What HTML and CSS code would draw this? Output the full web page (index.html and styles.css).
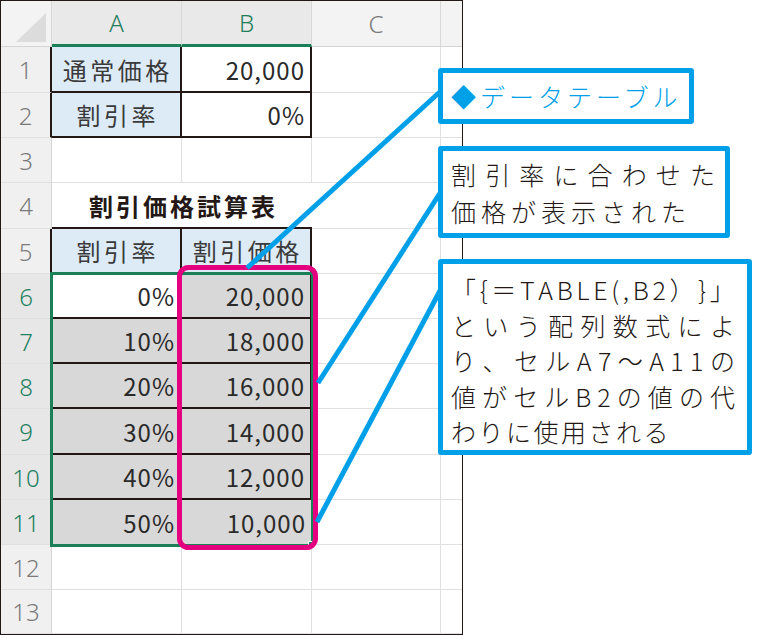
FILE: index.html
```html
<!DOCTYPE html>
<html lang="ja">
<head>
<meta charset="utf-8">
<title>データテーブル</title>
<link rel="stylesheet" href="styles.css">
</head>
<body>
<div class="page">
  <div class="sheet">
    <div class="c h corner"><svg width="50" height="45" viewBox="0 0 50 45"><polygon points="15,41 45,41 45,12" fill="#dcdcdc"/></svg></div>
    <div class="c h sel">A</div>
    <div class="c h sel">B</div>
    <div class="c h">C</div>
    <div class="c h last"></div>

    <div class="c r dk">1</div>
    <div class="c jp fb bx">通常価格</div>
    <div class="c num bx">20,000</div>
    <div class="c"></div>
    <div class="c last"></div>

    <div class="c r dk">2</div>
    <div class="c jp fb bx">割引率</div>
    <div class="c num bx">0%</div>
    <div class="c"></div>
    <div class="c last"></div>

    <div class="c r">3</div>
    <div class="c"></div>
    <div class="c"></div>
    <div class="c"></div>
    <div class="c last"></div>

    <div class="c r">4</div>
    <div class="c title bb">割引価格試算表</div>
    <div class="c"></div>
    <div class="c last"></div>

    <div class="c r dk">5</div>
    <div class="c jp fb bx">割引率</div>
    <div class="c jp fb bx">割引価格</div>
    <div class="c"></div>
    <div class="c last"></div>

    <div class="c r sel">6</div>
    <div class="c num bx">0%</div>
    <div class="c num fg bx">20,000</div>
    <div class="c"></div>
    <div class="c last"></div>

    <div class="c r sel">7</div>
    <div class="c num fg bx">10%</div>
    <div class="c num fg bx">18,000</div>
    <div class="c"></div>
    <div class="c last"></div>

    <div class="c r sel">8</div>
    <div class="c num fg bx">20%</div>
    <div class="c num fg bx">16,000</div>
    <div class="c"></div>
    <div class="c last"></div>

    <div class="c r sel">9</div>
    <div class="c num fg bx">30%</div>
    <div class="c num fg bx">14,000</div>
    <div class="c"></div>
    <div class="c last"></div>

    <div class="c r sel">10</div>
    <div class="c num fg bx">40%</div>
    <div class="c num fg bx">12,000</div>
    <div class="c"></div>
    <div class="c last"></div>

    <div class="c r sel">11</div>
    <div class="c num fg br">50%</div>
    <div class="c num fg">10,000</div>
    <div class="c"></div>
    <div class="c last"></div>

    <div class="c r">12</div>
    <div class="c"></div>
    <div class="c"></div>
    <div class="c"></div>
    <div class="c last"></div>

    <div class="c r">13</div>
    <div class="c"></div>
    <div class="c"></div>
    <div class="c"></div>
    <div class="c last"></div>

    <div class="selbox"></div>
    <div class="handle"></div>
  </div>

  <svg class="ov" width="783" height="635" viewBox="0 0 783 635">
    <rect x="179.5" y="267.5" width="136" height="280" rx="9" ry="9" fill="none" stroke="#e4007f" stroke-width="5"/>
    <g stroke="#00a0e9" stroke-width="5" stroke-linecap="butt">
      <line x1="247" y1="268" x2="442" y2="90"/>
      <line x1="318" y1="383" x2="442" y2="190"/>
      <line x1="317" y1="522" x2="442" y2="287"/>
    </g>
  </svg>

  <div class="co co1">◆データテーブル</div>
  <div class="co co2">
    <div class="jl"><span>割</span><span>引</span><span>率</span><span>に</span><span>合</span><span>わ</span><span>せ</span><span>た</span></div>
    <div class="l2">価格が表示された</div>
  </div>
  <div class="co co3">
    <div class="jl"><span>「</span><span>{</span><span>＝</span><span>T</span><span>A</span><span>B</span><span>L</span><span>E</span><span>(</span><span>,</span><span>B</span><span>2</span><span>）</span><span>}</span><span>」</span></div>
    <div class="jl"><span>と</span><span>い</span><span>う</span><span>配</span><span>列</span><span>数</span><span>式</span><span>に</span><span>よ</span></div>
    <div class="jl"><span>り</span><span>、</span><span>セ</span><span>ル</span><span>A</span><span>7</span><span>〜</span><span>A</span><span>1</span><span>1</span><span>の</span></div>
    <div class="jl"><span>値</span><span>が</span><span>セ</span><span>ル</span><span>B</span><span>2</span><span>の</span><span>値</span><span>の</span><span>代</span></div>
    <div class="l5">わりに使用される</div>
  </div>
</div>
</body>
</html>
```

FILE: styles.css
```css
* {
  box-sizing: border-box;
  margin: 0;
  padding: 0;
}

html, body {
  background: #fff;
}

body {
  margin: 0;
  font-family: "Noto Sans CJK JP", sans-serif;
}

.page {
  position: relative;
  width: 783px;
  height: 635px;
  overflow: hidden;
  background: #fff;
}

.sheet {
  position: relative;
  width: 463px;
  height: 635px;
  border: 1px solid #231815;
  display: grid;
  grid-template-columns: 51px 130px 130px 129px 1fr;
  grid-template-rows: 46px 46px 45px 45px 46px 45px 45px 45px 45px 46px 45px 45px 45px 44px;
  background: #fff;
}

.c {
  display: flex;
  align-items: center;
  border-right: 1px solid #e0e0e0;
  border-bottom: 1px solid #e0e0e0;
  font-size: 24px;
  color: #333;
  white-space: nowrap;
  overflow: hidden;
}

.c.last {
  border-right: none;
}

.h {
  background: #f3f3f3;
  justify-content: center;
  font-family: "Noto Sans", sans-serif;
  font-size: 24px;
  font-weight: 300;
  color: #7a7a7a;
  border-right-color: #d8d8d8;
  border-bottom-color: #d4d4d4;
}

.h.sel {
  background: #e8e9e8;
  color: #1f7d5b;
  border-bottom: 3px solid #1b7f57;
}

.corner {
  align-items: flex-end;
  justify-content: flex-start;
}

.corner svg {
  display: block;
}

.r {
  background: #f0f0f0;
  justify-content: center;
  font-family: "Noto Sans", sans-serif;
  font-weight: 300;
  color: #7a7a7a;
  border-right-color: #d4d4d4;
}

.r.sel {
  background: #e7e7e7;
  color: #21805e;
}

.r.dk {
  border-right: 2px solid #231815;
}

.jp {
  justify-content: center;
  letter-spacing: 3.5px;
  padding-left: 3.5px;
  color: #3a3a3a;
}

.num {
  justify-content: flex-end;
  padding-right: 5px;
  letter-spacing: 1px;
  color: #2a2a2a;
}

.fb {
  background: #ddebf7;
}

.fg {
  background: #d8d8d8;
}

.bx {
  border-right: 2px solid #231815;
  border-bottom: 2px solid #231815;
}

.bb {
  border-bottom: 2px solid #231815;
}

.br {
  border-right: 2px solid #231815;
}

.title {
  grid-column: span 2;
  justify-content: center;
  font-weight: 700;
  letter-spacing: 3px;
  padding-left: 3px;
  color: #231815;
  border-right: none;
}

.selbox {
  position: absolute;
  left: 49px;
  top: 271px;
  width: 264px;
  height: 275px;
  border: 3px solid #1b7f57;
}

.handle {
  position: absolute;
  left: 307px;
  top: 540px;
  width: 7px;
  height: 7px;
  background: #1b7f57;
  border: 1px solid #fff;
}

.ov {
  position: absolute;
  left: 0;
  top: 0;
  pointer-events: none;
}

.co {
  position: absolute;
  left: 438px;
  border: 5px solid #00a0e9;
  border-radius: 3px;
  background: #fff;
  font-size: 25px;
  font-weight: 300;
  color: #231815;
  white-space: nowrap;
}

.co1 {
  top: 68px;
  width: 256px;
  height: 56px;
  line-height: 46px;
  padding-left: 8px;
  color: #00a0e9;
  letter-spacing: 4px;
}

.co2 {
  top: 146px;
  width: 292px;
  height: 92px;
  padding: 5px 10px 3px 8px;
  line-height: 37px;
}

.co3 {
  top: 259px;
  width: 314px;
  height: 196px;
  padding: 8px 12px 2px 8px;
  line-height: 35.5px;
}

.jl {
  display: flex;
  justify-content: space-between;
}

.l2 {
  letter-spacing: 5px;
}

.l5 {
  letter-spacing: 2.5px;
}
```
